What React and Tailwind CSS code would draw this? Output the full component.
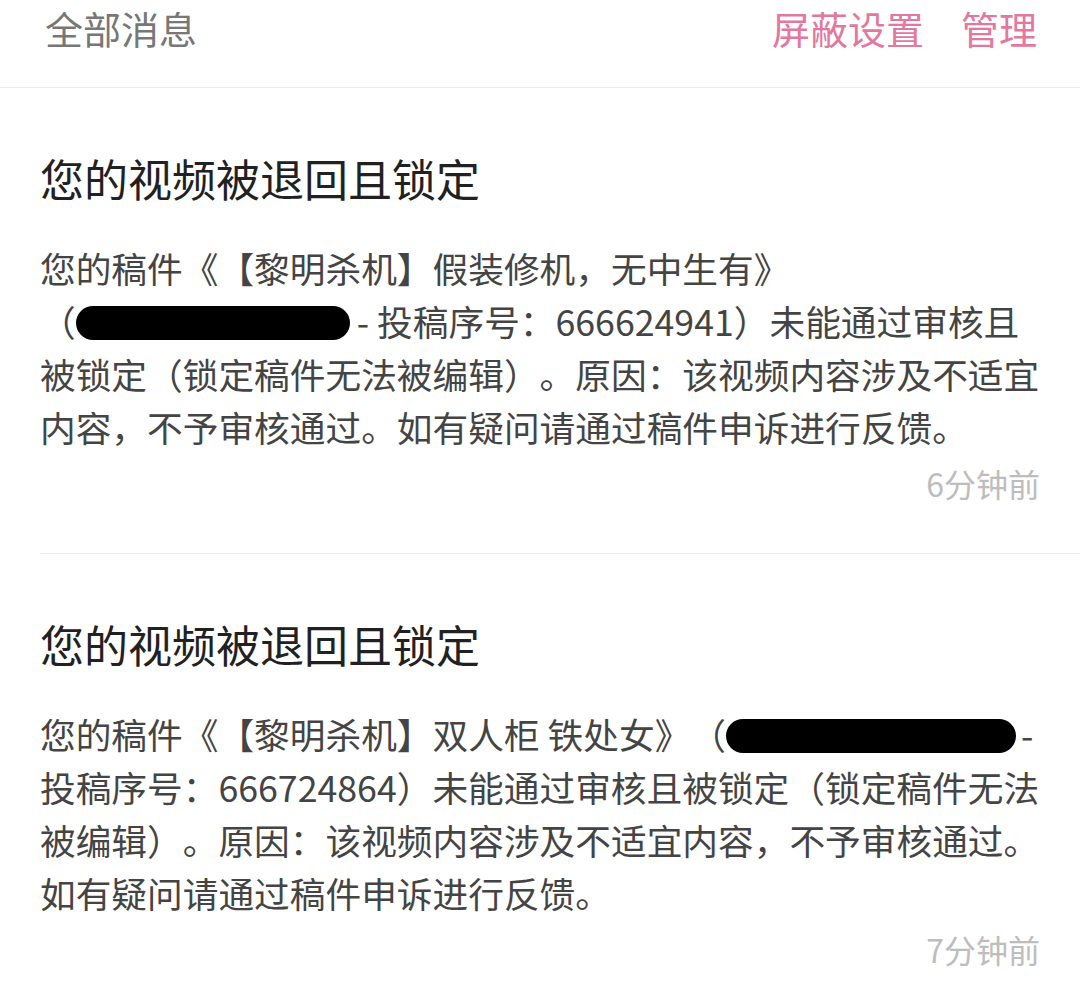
import React from "react";

const font = { fontFamily: '"Noto Sans CJK SC", "Noto Sans", sans-serif' };

function Blob({ w }) {
  return (
    <span
      className="inline-block h-[34px] rounded-full bg-black align-middle -mt-[6px]"
      style={{ width: w }}
    />
  );
}

const messages = [
  {
    time: "6分钟前",
    lines: [
      <>您的稿件《【黎明杀机】假装修机，无中生有》</>,
      <>（<Blob w={274} /><span className="ml-[7px]">- 投稿序号：666624941）未能通过审核且</span></>,
      <>被锁定（锁定稿件无法被编辑）。原因：该视频内容涉及不适宜</>,
      <>内容，不予审核通过。如有疑问请通过稿件申诉进行反馈。</>,
    ],
  },
  {
    time: "7分钟前",
    lines: [
      <>您的稿件《【黎明杀机】双人柜 铁处女》（<Blob w={290} /><span className="ml-[5px]">-</span></>,
      <>投稿序号：666724864）未能通过审核且被锁定（锁定稿件无法</>,
      <>被编辑）。原因：该视频内容涉及不适宜内容，不予审核通过。</>,
      <>如有疑问请通过稿件申诉进行反馈。</>,
    ],
  },
];

export default function App() {
  return (
    <div className="w-[1080px] h-[1006px] bg-white overflow-hidden [text-spacing-trim:space-all]" style={font}>
      <div className="h-[88px] flex items-start justify-between pl-[45px] pr-[43px] pt-[3px] border-b border-[#ececec]">
        <span className="text-[38px] leading-[50px] text-[#777777]">全部消息</span>
        <div className="flex gap-[37px] text-[38px] leading-[50px] text-[#e2789e]">
          <span>屏蔽设置</span>
          <span>管理</span>
        </div>
      </div>

      {messages.map((m, i) => (
        <div key={i} className="ml-[40px] pr-[40px] pt-[60px] pb-[50px] border-b border-[#ececec]">
          <div className="text-[44px] leading-[60px] text-[#212121]">您的视频被退回且锁定</div>
          <div className="mt-[33px] text-[35.7px] leading-[53px] text-[#444444]">
            {m.lines.map((l, j) => (
              <div key={j} className="whitespace-nowrap">{l}</div>
            ))}
          </div>
          <div className="mt-[10px] text-right text-[32px] leading-[40px] text-[#bdbdbd]">{m.time}</div>
        </div>
      ))}
    </div>
  );
}
